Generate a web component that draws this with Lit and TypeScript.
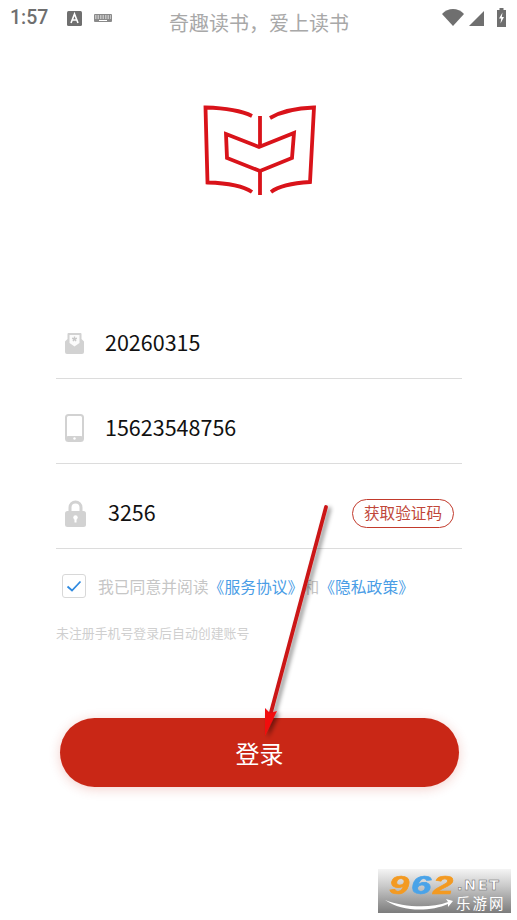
import { LitElement, html, css, svg } from 'lit';
import { customElement } from 'lit/decorators.js';

const inboxIcon = html`<svg width="19" height="21" viewBox="0 0 19 21">
  <path fill="#d2d2d2" d="M3.500 0h12a1 1 0 0 1 1 1v5l2.500 2.500V19a2 2 0 0 1-2 2H2a2 2 0 0 1-2-2V8.500L2.500 6V1a1 1 0 0 1 1-1z"/>
  <path fill="#fff" d="M4.500 2h10v8l-5 3.500-5-3.500z" opacity=".9"/>
  <path fill="#c8c8c8" d="M8.800 3.500h1.400v1.600l1.500-.5.400 1.300-1.500.5 1 1.300-1.100.8-1-1.300-1 1.300-1.100-.8 1-1.300-1.500-.5.400-1.300 1.500.5z"/>
</svg>`;

const phoneIcon = html`<svg width="19" height="28" viewBox="0 0 19 28">
  <rect x="1" y="1" width="17" height="26" rx="2.500" fill="none" stroke="#d2d2d2" stroke-width="2"/>
  <rect x="1" y="22" width="17" height="5" rx="2" fill="#d2d2d2"/>
  <circle cx="9.500" cy="24.500" r="1.200" fill="#fff"/>
</svg>`;

const lockIcon = html`<svg width="21" height="27" viewBox="0 0 21 27">
  <path fill="none" stroke="#d2d2d2" stroke-width="3" d="M5 12V7.500a5.500 5.500 0 0 1 11 0V12"/>
  <rect y="11" width="21" height="16" rx="2.500" fill="#d2d2d2"/>
  <circle cx="10.500" cy="17.500" r="2.200" fill="#fff"/>
  <rect x="9.500" y="18" width="2" height="4.500" fill="#fff"/>
</svg>`;

@customElement('app-root')
export class AppRoot extends LitElement {
  static styles = css`
    :host {
      display: block;
      position: relative;
      width: 517px;
      height: 920px;
      overflow: hidden;
      background: #fff;
      font-family: "Noto Sans CJK SC", "Noto Sans", sans-serif;
    }
    .status {
      height: 44px;
      display: flex;
      align-items: flex-start;
      padding: 0 0 0 10px;
      color: #6f6f6f;
    }
    .time {
      font: 500 19.5px Roboto, sans-serif;
      line-height: 36px;
      width: 57px;
    }
    .status-left {
      display: flex;
      gap: 12px;
      align-items: center;
      height: 36px;
      width: 102px;
    }
    .title {
      font-size: 20px;
      line-height: 46px;
      color: #a8a8a8;
      width: 180px;
      white-space: nowrap;
    }
    .status-right {
      margin-left: 93px;
      display: flex;
      align-items: center;
      gap: 12px;
      height: 34px;
    }
    .logo {
      display: flex;
      justify-content: center;
      margin: 56px 0 0 3px;
      height: 100px;
    }
    .form {
      margin: 94px 0 0 56px;
      width: 406px;
    }
    .row {
      border-bottom: 1px solid #dcdcdc;
      display: flex;
      align-items: center;
      padding-top: 10px;
      box-sizing: border-box;
      height: 85px;
    }
    .icon {
      width: 49px;
      padding-left: 9px;
      margin-top: 4px;
      box-sizing: border-box;
      display: flex;
    }
    .value {
      font-size: 21.5px;
      color: #111;
      flex: 1;
    }
    .code .value { padding-left: 3px; }
    .send {
      width: 102px;
      height: 29px;
      margin: 4px 8px 0 0;
      padding-bottom: 2px;
      box-sizing: border-box;
      border: 1.5px solid #c23a2c;
      border-radius: 15px;
      color: #c0473a;
      font-size: 15.6px;
      display: flex;
      align-items: center;
      justify-content: center;
    }
    .agree {
      display: flex;
      align-items: center;
      margin: 24px 0 0 6px;
      height: 26px;
      font-size: 15.8px;
      color: #c6c6c6;
      white-space: nowrap;
    }
    .check {
      width: 24px;
      height: 24px;
      box-sizing: border-box;
      border: 1px solid #d8d8d8;
      border-radius: 3px;
      margin-right: 12px;
      display: flex;
      align-items: center;
      justify-content: center;
    }
    .link { color: #4a9de6; }
    .hint {
      margin-top: 24px;
      font-size: 12.9px;
      line-height: 20px;
      color: #cfcfcf;
      white-space: nowrap;
    }
    .login {
      margin: 75px 0 0 60px;
      width: 399px;
      height: 69px;
      border-radius: 35px;
      background: #c92716;
      box-shadow: 0 2px 12px rgba(201, 39, 22, 0.22);
      color: #fff;
      font-size: 24px;
      display: flex;
      align-items: center;
      justify-content: center;
    }
    .arrow {
      position: absolute;
      left: 0;
      top: 0;
      pointer-events: none;
    }
    .mark {
      position: absolute;
      left: 378px;
      top: 869px;
      width: 133px;
      height: 44px;
      background: linear-gradient(180deg, #f4f4f4 0%, #c8c8c8 40%, #7c7c7c 100%);
      overflow: hidden;
    }
    .digits {
      position: absolute;
      left: 11px;
      top: 4px;
      display: flex;
      gap: 2px;
      font: italic 700 26px/24px "Liberation Sans", sans-serif;
    }
    .digit {
      display: block;
      width: 20px;
      transform: scaleX(1.4);
      transform-origin: 0 50%;
      color: #f39a22;
      -webkit-text-stroke: 0.6px #f39a22;
    }
    .digit.blue {
      color: #4aa3e8;
      -webkit-text-stroke-color: #4aa3e8;
    }
    .mark-net {
      position: absolute;
      left: 79px;
      top: 8px;
      font: 700 14.5px/16px "DejaVu Sans", sans-serif;
      letter-spacing: 1.5px;
      color: #fff;
      -webkit-text-stroke: 0.5px #666;
      white-space: nowrap;
    }
    .mark-cn {
      position: absolute;
      left: 78px;
      top: 25px;
      font-size: 14.5px;
      line-height: 18px;
      letter-spacing: 2px;
      color: #fff;
      white-space: nowrap;
    }
    .swoosh {
      position: absolute;
      left: 0;
      top: 0;
    }
  `;

  render() {
    return html`
      <div class="status">
        <span class="time">1:57</span>
        <span class="status-left">
          <svg width="15" height="15" viewBox="0 0 15 15">
            <rect width="15" height="15" rx="1.500" fill="#6f6f6f"/>
            <path fill="none" stroke="#fff" stroke-width="1.600" d="M4 12 7.500 3 11 12M5 9h5"/>
          </svg>
          <svg width="18" height="10" viewBox="0 0 18 10">
            <rect y="1" width="18" height="8" rx="1" fill="#8a8a8a"/>
            <path stroke="#fff" stroke-width="1" stroke-dasharray="1.500 1" d="M1 3h16M1 5h16"/>
            <path stroke="#fff" d="M5 7.500h8"/>
          </svg>
        </span>
        <span class="title">奇趣读书，爱上读书</span>
        <span class="status-right">
          <svg width="43" height="17" viewBox="0 0 43 17">
            <path fill="#6f6f6f" d="M0 5C3 1.800 7 0 11 0s8 1.800 11 5L11 17z"/>
            <path fill="#6f6f6f" d="M27 17 42 2v15z"/>
          </svg>
          <svg width="9" height="19" viewBox="0 0 9 19">
            <path fill="#6f6f6f" d="M2.500 0h4v2H9v17H0V2h2.500z"/>
            <path fill="#fff" d="M5.500 4.500 2 10.500h2.200L3.500 15.500 7 9H4.800z"/>
          </svg>
        </span>
      </div>

      <div class="logo">
        <svg width="120" height="100" viewBox="200 100 120 100" fill="none" stroke="#d9131a" stroke-width="3.800">
          <path d="M252 116C240 110 222 108 205.500 107.500L207.500 182.500C224 183 242 185 252 192"/>
          <path d="M270 118C282 111 298 108 314 107.500L310 182C294 183 280 185 271 192"/>
          <path d="M260 116V147M260 170V195"/>
          <path d="M226 134 259 147 294 133 292 158 260 171 227 158z"/>
        </svg>
      </div>

      <div class="form">
        <div class="row">
          <span class="icon">${inboxIcon}</span>
          <span class="value">20260315</span>
        </div>
        <div class="row">
          <span class="icon">${phoneIcon}</span>
          <span class="value">15623548756</span>
        </div>
        <div class="row code">
          <span class="icon">${lockIcon}</span>
          <span class="value">3256</span>
          <span class="send">获取验证码</span>
        </div>
        <div class="agree">
          <span class="check">
            <svg width="16" height="12" viewBox="0 0 16 12" fill="none" stroke="#2f8ae0" stroke-width="1.800">
              <path d="M1.500 6.500 6 10.500 14.500 1.500"/>
            </svg>
          </span>
          我已同意并阅读<span class="link">《服务协议》</span>和<span class="link">《隐私政策》</span>
        </div>
        <div class="hint">未注册手机号登录后自动创建账号</div>
      </div>

      <div class="login">登录</div>

      <svg class="arrow" width="517" height="920" viewBox="0 0 517 920">
        ${svg`
          <defs>
            <filter id="sh" x="-50%" y="-10%" width="200%" height="120%">
              <feDropShadow dx="3" dy="2" stdDeviation="2" flood-color="#000" flood-opacity=".45"/>
            </filter>
          </defs>
          <g filter="url(#sh)">
            <path d="M326 507 270 716" stroke="#cb1518" stroke-width="3.800" stroke-linecap="round"/>
            <path d="M265 708 270 713 277 711 265 736z" fill="#f20d10"/>
          </g>
        `}
      </svg>

      <div class="mark">
        <svg class="swoosh" width="133" height="44" viewBox="0 0 133 44">
          <path fill="#fff" d="M7 31C25 38 52 40 70 33L68 30 75 32 70 38 70 35C52 43 24 43 7 31z"/>
        </svg>
        <span class="digits">
          <span class="digit">9</span>
          <span class="digit blue">6</span>
          <span class="digit">2</span>
        </span>
        <span class="mark-net">.NET</span>
        <span class="mark-cn">乐游网</span>
      </div>
    `;
  }
}
